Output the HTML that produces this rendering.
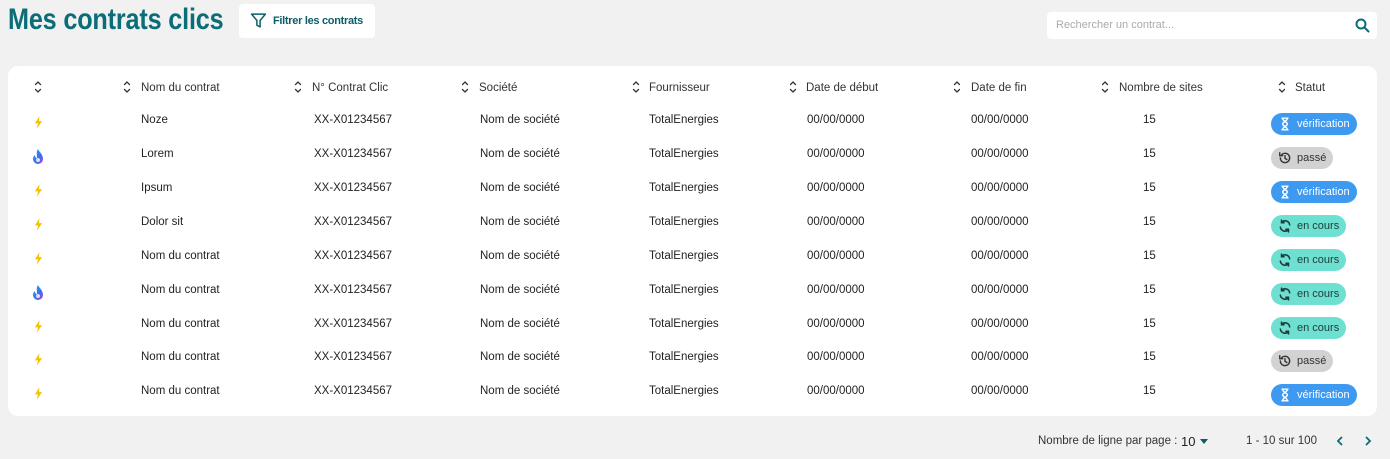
<!DOCTYPE html>
<html><head><meta charset="utf-8"><style>
*{margin:0;padding:0;box-sizing:border-box}
body{width:1390px;height:459px;background:#f2f1f1;font-family:"Liberation Sans",Arial,sans-serif;position:relative;overflow:hidden;color:#222}
.abs{position:absolute}
h1{position:absolute;left:8px;top:3px;font-size:30px;font-weight:bold;color:#0b6d77;transform:scaleX(0.84);transform-origin:left;letter-spacing:-0.2px;white-space:nowrap}
.filt{left:239px;top:4px;width:136px;height:34px;background:#fff;border-radius:4px;font-size:11px;color:#0b5d66;font-weight:bold;letter-spacing:-0.3px}
.search{left:1047px;top:12px;width:330px;height:27px;background:#fff;border-radius:4px;font-size:11px;color:#aaa}
.card{left:8px;top:66px;width:1369px;height:350px;background:#fff;border-radius:10px}
.row{position:absolute;left:0;width:1390px;height:16px;font-size:11.5px;line-height:16px}
.row span{position:absolute;white-space:nowrap}
.hd{font-size:11.5px;color:#333}
.sort{position:absolute;width:8px;height:14px}
.b{position:absolute;left:1271px;height:22px;border-radius:11px;font-size:11px;line-height:22px;padding-left:26px}
.v{width:86px;background:#3d9af0;color:#fff}
.p{width:62px;background:#d2d2d2;color:#333}
.c{width:75px;background:#6ee0d2;color:#1d3a38}
.b svg{position:absolute;left:7px;top:4px;width:14px;height:14px}
</style></head><body>
<h1>Mes contrats clics</h1>
<div class="abs filt"><svg class="abs" style="left:11px;top:8px" width="17" height="17" viewBox="0 0 16 16"><path d="M1.5 2h13l-5 6v6l-3-1.5V8z" fill="none" stroke="#0b5d66" stroke-width="1.4" stroke-linejoin="round"/></svg><span class="abs" style="left:34px;top:11px">Filtrer les contrats</span></div>
<div class="abs search"><span class="abs" style="left:9px;top:7px">Rechercher un contrat...</span><svg class="abs" style="left:308px;top:6px" width="15" height="15" viewBox="0 0 15 15"><circle cx="6" cy="6" r="4.5" fill="none" stroke="#0b6d77" stroke-width="2"/><path d="M9.5 9.5l4 4" stroke="#0b6d77" stroke-width="2" stroke-linecap="round"/></svg></div>
<div class="abs card"></div>

<svg width="0" height="0" style="position:absolute"><defs>
<symbol id="s" viewBox="0 0 8 14"><path d="M1.5 4.5L4 2l2.5 2.5M1.5 9.5L4 12l2.5-2.5" fill="none" stroke="#333" stroke-width="1.3" stroke-linecap="round"/></symbol>
<symbol id="bolt" viewBox="0 0 10 14"><path d="M6 0L1 8h3.5L3 14l6-8.5H5.5z" fill="#f2c300"/></symbol>
<symbol id="flame" viewBox="0 0 14 16"><defs><linearGradient id="fg" x1="0" y1="0" x2="1" y2="1"><stop offset="0" stop-color="#2a9cf0"/><stop offset="0.6" stop-color="#3a6ff0"/><stop offset="1" stop-color="#c03ae0"/></linearGradient></defs><path d="M7 0C8 3 12 5 12 10a5 5 0 0 1-10 0c0-2 1-3 2-4 0 2 1 3 2 3C6 6 5 3 7 0z" fill="url(#fg)"/><circle cx="7" cy="11" r="2" fill="#fff" opacity=".8"/></symbol>
<symbol id="hg" viewBox="0 0 12 12"><path d="M3 1h6M3 11h6M4 1c0 3 4 3 4 5s-4 2-4 5M8 1c0 3-4 3-4 5s4 2 4 5" fill="none" stroke="#fff" stroke-width="1.2"/></symbol>
<symbol id="hi" viewBox="0 0 12 12"><path d="M2 6a4 4 0 1 0 1.2-2.9M1.5 1.5v2.5H4M6 4v2.3l1.6 1" fill="none" stroke="#333" stroke-width="1.2" stroke-linecap="round"/></symbol>
<symbol id="rf" viewBox="0 0 12 12"><path d="M10 5A4 4 0 0 0 3 3M2 7a4 4 0 0 0 7 2M3 1v2.2h2.2M9 11V8.8H6.8" fill="none" stroke="#1d3a38" stroke-width="1.3" stroke-linecap="round"/></symbol>
</defs></svg>

<div class="row hd" style="top:80px">
<svg class="sort" style="left:34px;top:0px"><use href="#s"/></svg>
<svg class="sort" style="left:123px;top:0px"><use href="#s"/></svg><span style="left:141px">Nom du contrat</span>
<svg class="sort" style="left:294px;top:0px"><use href="#s"/></svg><span style="left:312px">N° Contrat Clic</span>
<svg class="sort" style="left:461px;top:0px"><use href="#s"/></svg><span style="left:479px">Société</span>
<svg class="sort" style="left:632px;top:0px"><use href="#s"/></svg><span style="left:649px">Fournisseur</span>
<svg class="sort" style="left:789px;top:0px"><use href="#s"/></svg><span style="left:806px">Date de début</span>
<svg class="sort" style="left:953px;top:0px"><use href="#s"/></svg><span style="left:971px">Date de fin</span>
<svg class="sort" style="left:1101px;top:0px"><use href="#s"/></svg><span style="left:1119px">Nombre de sites</span>
<svg class="sort" style="left:1278px;top:0px"><use href="#s"/></svg><span style="left:1295px">Statut</span>
</div>

<div class="row" style="top:112px"><svg class="abs" style="left:34px;top:4px" width="9" height="13"><use href="#bolt"/></svg><span style="left:141px">Noze</span><span style="left:314px">XX-X01234567</span><span style="left:480px">Nom de société</span><span style="left:649px">TotalEnergies</span><span style="left:807px">00/00/0000</span><span style="left:971px">00/00/0000</span><span style="left:1143px">15</span><div class="b v" style="top:1px"><svg><use href="#hg"/></svg>vérification</div></div>
<div class="row" style="top:146px"><svg class="abs" style="left:31px;top:3px" width="14" height="16"><use href="#flame"/></svg><span style="left:141px">Lorem</span><span style="left:314px">XX-X01234567</span><span style="left:480px">Nom de société</span><span style="left:649px">TotalEnergies</span><span style="left:807px">00/00/0000</span><span style="left:971px">00/00/0000</span><span style="left:1143px">15</span><div class="b p" style="top:1px"><svg><use href="#hi"/></svg>passé</div></div>
<div class="row" style="top:180px"><svg class="abs" style="left:34px;top:4px" width="9" height="13"><use href="#bolt"/></svg><span style="left:141px">Ipsum</span><span style="left:314px">XX-X01234567</span><span style="left:480px">Nom de société</span><span style="left:649px">TotalEnergies</span><span style="left:807px">00/00/0000</span><span style="left:971px">00/00/0000</span><span style="left:1143px">15</span><div class="b v" style="top:1px"><svg><use href="#hg"/></svg>vérification</div></div>
<div class="row" style="top:214px"><svg class="abs" style="left:34px;top:4px" width="9" height="13"><use href="#bolt"/></svg><span style="left:141px">Dolor sit</span><span style="left:314px">XX-X01234567</span><span style="left:480px">Nom de société</span><span style="left:649px">TotalEnergies</span><span style="left:807px">00/00/0000</span><span style="left:971px">00/00/0000</span><span style="left:1143px">15</span><div class="b c" style="top:1px"><svg><use href="#rf"/></svg>en cours</div></div>
<div class="row" style="top:248px"><svg class="abs" style="left:34px;top:4px" width="9" height="13"><use href="#bolt"/></svg><span style="left:141px">Nom du contrat</span><span style="left:314px">XX-X01234567</span><span style="left:480px">Nom de société</span><span style="left:649px">TotalEnergies</span><span style="left:807px">00/00/0000</span><span style="left:971px">00/00/0000</span><span style="left:1143px">15</span><div class="b c" style="top:1px"><svg><use href="#rf"/></svg>en cours</div></div>
<div class="row" style="top:282px"><svg class="abs" style="left:31px;top:3px" width="14" height="16"><use href="#flame"/></svg><span style="left:141px">Nom du contrat</span><span style="left:314px">XX-X01234567</span><span style="left:480px">Nom de société</span><span style="left:649px">TotalEnergies</span><span style="left:807px">00/00/0000</span><span style="left:971px">00/00/0000</span><span style="left:1143px">15</span><div class="b c" style="top:1px"><svg><use href="#rf"/></svg>en cours</div></div>
<div class="row" style="top:316px"><svg class="abs" style="left:34px;top:4px" width="9" height="13"><use href="#bolt"/></svg><span style="left:141px">Nom du contrat</span><span style="left:314px">XX-X01234567</span><span style="left:480px">Nom de société</span><span style="left:649px">TotalEnergies</span><span style="left:807px">00/00/0000</span><span style="left:971px">00/00/0000</span><span style="left:1143px">15</span><div class="b c" style="top:1px"><svg><use href="#rf"/></svg>en cours</div></div>
<div class="row" style="top:349px"><svg class="abs" style="left:34px;top:4px" width="9" height="13"><use href="#bolt"/></svg><span style="left:141px">Nom du contrat</span><span style="left:314px">XX-X01234567</span><span style="left:480px">Nom de société</span><span style="left:649px">TotalEnergies</span><span style="left:807px">00/00/0000</span><span style="left:971px">00/00/0000</span><span style="left:1143px">15</span><div class="b p" style="top:1px"><svg><use href="#hi"/></svg>passé</div></div>
<div class="row" style="top:383px"><svg class="abs" style="left:34px;top:4px" width="9" height="13"><use href="#bolt"/></svg><span style="left:141px">Nom du contrat</span><span style="left:314px">XX-X01234567</span><span style="left:480px">Nom de société</span><span style="left:649px">TotalEnergies</span><span style="left:807px">00/00/0000</span><span style="left:971px">00/00/0000</span><span style="left:1143px">15</span><div class="b v" style="top:1px"><svg><use href="#hg"/></svg>vérification</div></div>

<div class="abs" style="left:1038px;top:435px;font-size:11.5px;color:#333">Nombre de ligne par page :</div>
<div class="abs" style="left:1181px;top:434px;font-size:13px;color:#222">10</div>
<svg class="abs" style="left:1200px;top:439px" width="8" height="6"><path d="M0 0h8L4 5z" fill="#0b5d66"/></svg>
<div class="abs" style="left:1246px;top:435px;font-size:11.5px;color:#333">1 - 10 sur 100</div>
<svg class="abs" style="left:1336px;top:436px" width="8" height="10"><path d="M6 1L2 5l4 4" fill="none" stroke="#0b6d77" stroke-width="1.8"/></svg>
<svg class="abs" style="left:1364px;top:436px" width="8" height="10"><path d="M2 1l4 4-4 4" fill="none" stroke="#0b6d77" stroke-width="1.8"/></svg>
</body></html>
